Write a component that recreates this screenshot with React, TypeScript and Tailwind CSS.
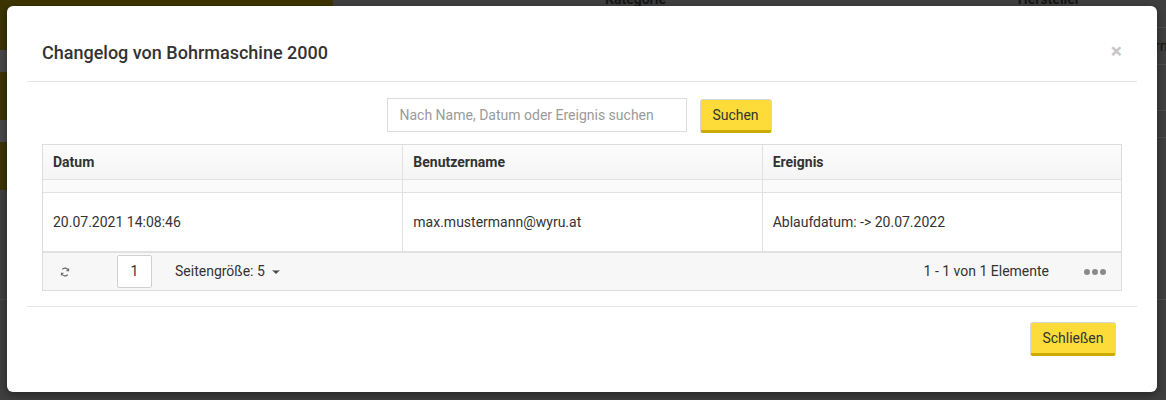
import { ChevronDown } from 'lucide-react';

const font = { fontFamily: 'Roboto, "Noto Sans", sans-serif' };

function YellowButton({ label, className = '' }: { label: string; className?: string }) {
  return (
    <button
      className={`h-[34px] rounded-[3px] border border-[#d6d6d6] border-b-[3px] border-b-[#cbab00] bg-[#fddc3a] text-[14px] text-[#333] ${className}`}
    >
      {label}
    </button>
  );
}

function RefreshIcon() {
  return (
    <svg width="12" height="12" viewBox="0 0 12 12" fill="none" stroke="#666" strokeWidth="1.1">
      <path d="M3.2 3.4A3.6 3.6 0 0 1 9.4 4.6" />
      <path d="M8.8 8.6A3.6 3.6 0 0 1 2.6 7.4" />
      <path d="M9.6 2.6v2.2H7.4" />
      <path d="M2.4 9.4V7.2h2.2" />
    </svg>
  );
}

export default function App() {
  return (
    <div className="relative h-[400px] w-full overflow-hidden bg-[#3f3f3f]" style={font}>
      {/* dimmed page behind the modal */}
      <div className="flex h-full">
        <div className="flex w-[333px] flex-col">
          <div className="h-[50px] rounded-br-md bg-[#3c3400]" />
          <div className="h-[22px] bg-[#484848]" />
          <div className="h-[48px] bg-[#3c3400]" />
          <div className="h-[22px] bg-[#484848]" />
          <div className="h-[48px] bg-[#3c3400]" />
          <div className="h-[110px] border-b border-[#4c4c4c]" />
        </div>
        <div className="flex flex-1 flex-col">
          <div className="mt-[-11px] flex h-[39px] items-start border-b border-[#4e4e4e] text-[14px] font-bold text-[#151515]">
            <span className="ml-[272px]">Kategorie</span>
            <span className="ml-auto mr-[86px]">Hersteller</span>
          </div>
          <div className="flex h-[37px] items-center justify-end border-b border-[#4e4e4e] text-[15px] text-[#151515]">
            <span className="mr-[-2px]">Vorn</span>
          </div>
          <div className="h-[46px] border-b border-[#4e4e4e]" />
          <div className="h-[27px] border-b border-[#4e4e4e]" />
          <div className="h-[162px] border-b border-[#4e4e4e]" />
        </div>
      </div>

      {/* modal */}
      <div className="absolute left-[7px] top-[6px] flex h-[386px] w-[1150px] flex-col rounded-md bg-white shadow-[0_3px_9px_rgba(0,0,0,0.4)]">
        <div className="mx-5 flex h-[76px] items-start justify-between border-b border-[#e5e5e5] px-[15px] pt-[34px]">
          <h4 className="text-[18px] font-medium leading-[26px] text-[#333]">Changelog von Bohrmaschine 2000</h4>
          <span className="mr-0 mt-[1px] text-[21px] font-bold leading-[20px] text-[#c6c6c6]">×</span>
        </div>

        <div className="mx-5 flex flex-col px-[15px] pt-4">
          <div className="flex justify-center gap-[13px] pr-[6px]">
            <div className="flex h-[34px] w-[300px] items-center border border-[#dcdcdc] px-3 text-[14px] text-[#9a9a9a]">
              Nach Name, Datum oder Ereignis suchen
            </div>
            <YellowButton label="Suchen" className="mt-[1px] h-[33px] w-[72px]" />
          </div>

          <div className="mt-[11px] border border-[#dcdcdc] text-[14px] text-[#333]">
            <div className="grid h-[35px] grid-cols-3 border-b border-[#e1e1e1] bg-gradient-to-b from-[#fcfcfc] to-[#f5f5f5] font-bold">
              <div className="flex items-center px-[10px]">Datum</div>
              <div className="flex items-center border-l border-[#e1e1e1] px-[10px]">Benutzername</div>
              <div className="flex items-center border-l border-[#e1e1e1] px-[10px]">Ereignis</div>
            </div>
            <div className="grid h-[13px] grid-cols-3 border-b border-[#e1e1e1] bg-[#fafafa]">
              <div />
              <div className="border-l border-[#e1e1e1]" />
              <div className="border-l border-[#e1e1e1]" />
            </div>
            <div className="grid h-[60px] grid-cols-3 border-b-2 border-[#e1e1e1]">
              <div className="flex items-center px-[10px]">20.07.2021 14:08:46</div>
              <div className="flex items-center border-l border-[#e1e1e1] px-[10px]">max.mustermann@wyru.at</div>
              <div className="flex items-center border-l border-[#e1e1e1] px-[10px]">Ablaufdatum: -&gt; 20.07.2022</div>
            </div>
            <div className="flex h-[37px] items-center bg-[#f7f7f7]">
              <div className="ml-[16px] flex w-[12px] justify-center">
                <RefreshIcon />
              </div>
              <div className="ml-[46px] flex h-[33px] w-[35px] items-center justify-center rounded-[2px] border border-[#d0d0d0] bg-white">
                1
              </div>
              <span className="ml-[23px]">Seitengröße: 5</span>
              <ChevronDown className="ml-[5px] h-3 w-3 text-[#444]" fill="#444" strokeWidth={2} />
              <span className="ml-auto">1 - 1 von 1 Elemente</span>
              <div className="ml-[35px] mr-[15px] flex gap-[2px]">
                <span className="h-[6px] w-[6px] rounded-full bg-[#8a8a8a]" />
                <span className="h-[6px] w-[6px] rounded-full bg-[#8a8a8a]" />
                <span className="h-[6px] w-[6px] rounded-full bg-[#8a8a8a]" />
              </div>
            </div>
          </div>
        </div>

        <div className="mx-5 mt-[15px] flex justify-end border-t border-[#e5e5e5] pr-[21px] pt-[15px]">
          <YellowButton label="Schließen" className="w-[86px]" />
        </div>
      </div>
    </div>
  );
}
